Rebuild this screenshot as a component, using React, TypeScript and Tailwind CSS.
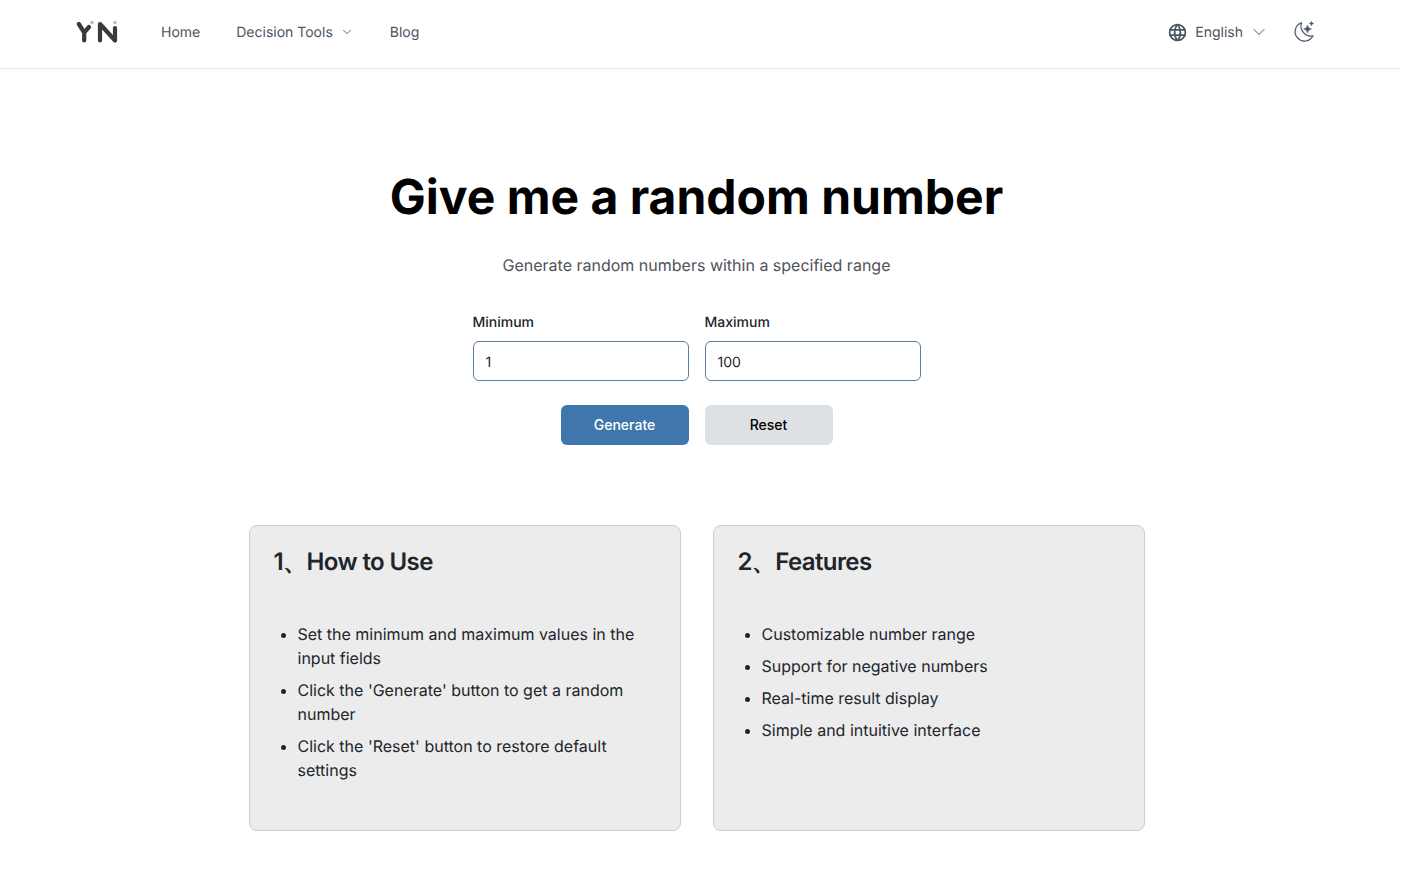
import { ChevronDown } from "lucide-react";
import { TbWorld } from "react-icons/tb";

const howTo = [
  "Set the minimum and maximum values in the input fields",
  "Click the 'Generate' button to get a random number",
  "Click the 'Reset' button to restore default settings",
];

const features = [
  "Customizable number range",
  "Support for negative numbers",
  "Real-time result display",
  "Simple and intuitive interface",
];

function Logo() {
  return (
    <svg width="44" height="26" viewBox="0 0 44 26" fill="none">
      <path d="M3.8 5 L9.2 13.5 L14 8 M9.2 13.5 V21.5" stroke="#3a3a3a" strokeWidth="4.2" strokeLinecap="round" strokeLinejoin="round" />
      <path d="M25 21.5 V5 L40 21.5 V9" stroke="#3a3a3a" strokeWidth="4.2" strokeLinecap="round" strokeLinejoin="round" />
      <circle cx="17" cy="3.5" r="1.8" fill="#b4c4b0" />
      <circle cx="40" cy="3.5" r="1.8" fill="#b4c4b0" />
    </svg>
  );
}

// Crescent with two sparkles
function MoonSparkle() {
  return (
    <svg width="22" height="22" viewBox="0 0 22 22" fill="none" stroke="#4b5563" strokeWidth="1.2" strokeLinejoin="round">
      <path d="M8.5 1.8 A9.4 9.4 0 1 0 20 14.8 A10 10 0 0 1 8.5 1.8 Z" />
      <path d="M14.5 4 Q15 7.5 18.5 8 Q15 8.5 14.5 12 Q14 8.5 10.5 8 Q14 7.5 14.5 4 Z" fill="#4b5563" strokeWidth="0.5" />
      <path d="M18.5 0.3 Q18.8 2.2 20.7 2.5 Q18.8 2.8 18.5 4.7 Q18.2 2.8 16.3 2.5 Q18.2 2.2 18.5 0.3 Z" fill="#4b5563" strokeWidth="0.4" />
    </svg>
  );
}

function Card({ title, items }: { title: string; items: string[] }) {
  return (
    <div className="h-[306px] rounded-lg border border-[#c3d0dd] bg-[#ececed] px-6 pt-[19px]">
      <h2 className="pt-px text-2xl leading-8 font-semibold tracking-tight text-[#212529]">{title}</h2>
      <ul className="mt-11 list-disc space-y-2 pl-6 text-base leading-6 text-[#212529]">
        {items.map((item) => (
          <li key={item}>{item}</li>
        ))}
      </ul>
    </div>
  );
}

function NumberField({ label, value }: { label: string; value: string }) {
  return (
    <div className="w-[216px]">
      <label className="block pt-px text-sm leading-5 font-medium text-[#212529]">{label}</label>
      <input
        readOnly
        value={value}
        className="mt-2 h-10 w-full rounded-md border border-[#5b7d9f] bg-white px-3 pt-0.5 text-sm text-[#212529] outline-none [text-rendering:geometricPrecision]"
      />
    </div>
  );
}

export default function App() {
  return (
    <div className="min-h-screen bg-white font-['Inter',sans-serif] [text-rendering:geometricPrecision]">
      <nav className="h-[69px] border-b border-[#e2e4ea]">
        <div className="flex h-full items-center pr-[85px] pb-1 pl-[75px]">
          <Logo />
          <div className="ml-[42px] flex items-center text-sm text-[#4b5563]">
            <span className="pt-0.5">Home</span>
            <span className="ml-9 pt-0.5">Decision Tools</span>
            <ChevronDown className="ml-[7px] h-3.5 w-3.5" strokeWidth={1.5} />
            <span className="ml-9 pt-0.5">Blog</span>
          </div>
          <div className="ml-auto flex items-center text-[#4b5563]">
            <TbWorld className="h-[21px] w-[21px]" />
            <span className="ml-[7px] pt-0.5 text-sm">English</span>
            <ChevronDown className="ml-1.5 h-5 w-5 text-[#9ca3af]" strokeWidth={1.5} />
            <div className="ml-6 mr-px">
              <MoonSparkle />
            </div>
          </div>
        </div>
      </nav>

      <main className="flex w-[1393px] max-w-full flex-col items-center">
        <h1 className="mt-[98px] text-5xl leading-[60px] font-bold text-black">Give me a random number</h1>
        <p className="mt-[26px] text-base leading-6 text-[#52525b]">
          Generate random numbers within a specified range
        </p>

        <div className="mt-[35px] flex gap-4">
          <NumberField label="Minimum" value="1" />
          <NumberField label="Maximum" value="100" />
        </div>

        <div className="mt-6 flex gap-4">
          <button className="h-10 w-32 rounded-md bg-[#3f77ac] text-sm font-medium text-white">Generate</button>
          <button className="h-10 w-32 rounded-md bg-[#dee1e4] text-sm font-medium text-black">Reset</button>
        </div>

        <div className="mt-20 grid w-[896px] grid-cols-2 gap-8">
          <Card title="1、How to Use" items={howTo} />
          <Card title="2、Features" items={features} />
        </div>
      </main>
    </div>
  );
}
